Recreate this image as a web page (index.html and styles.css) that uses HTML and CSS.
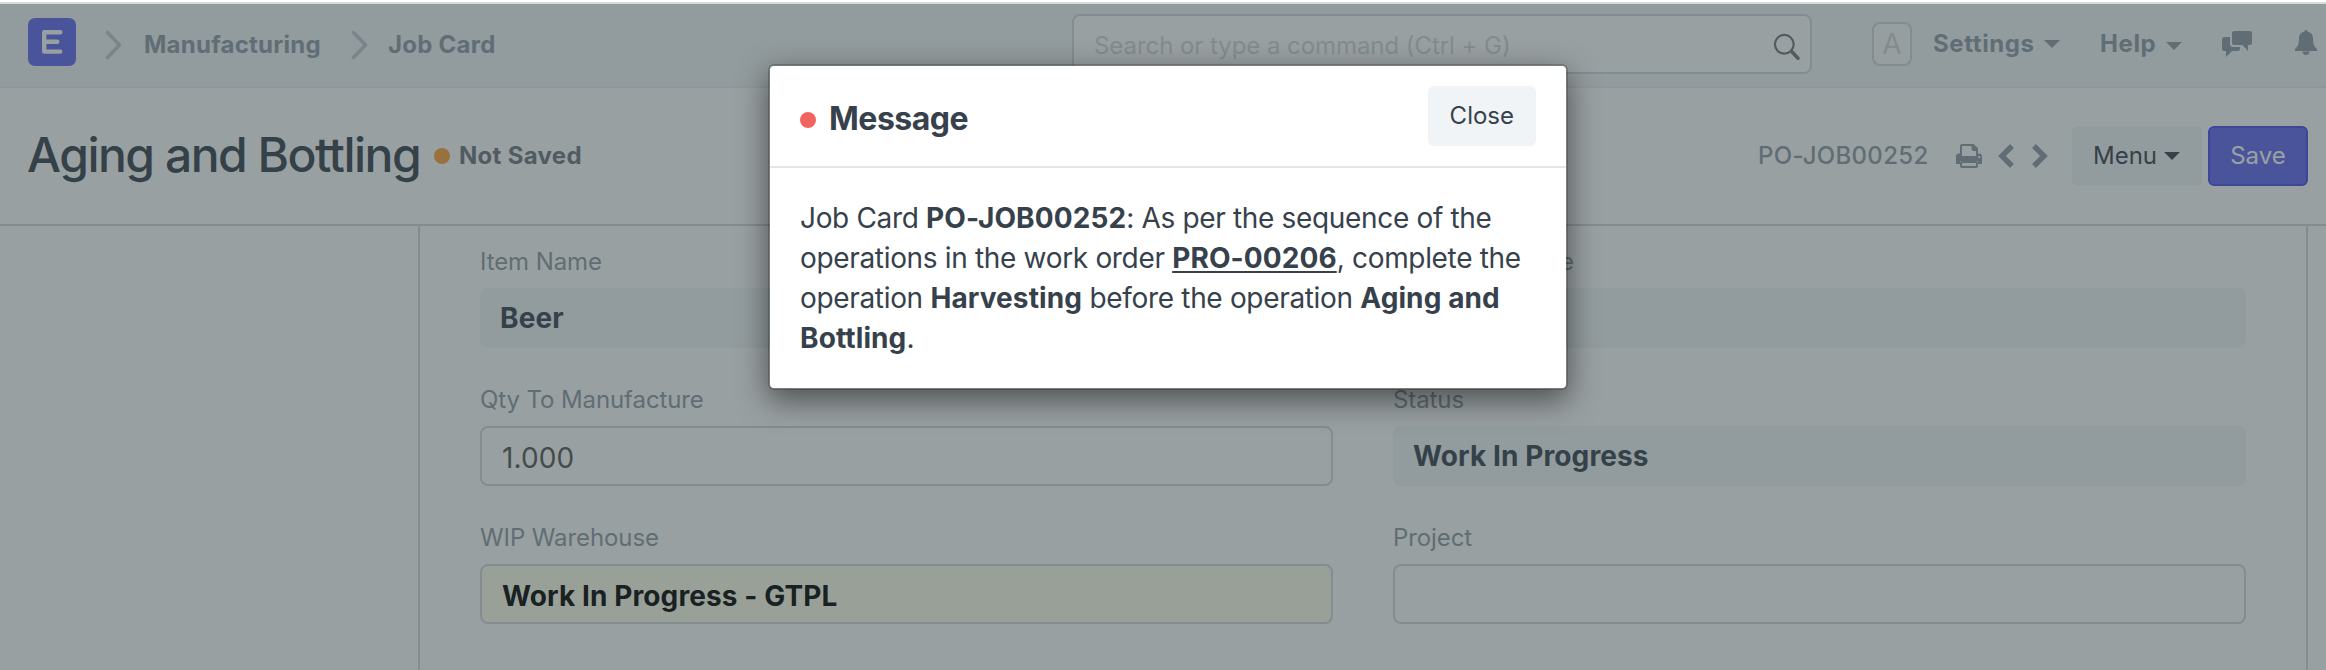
FILE: index.html
```
<!DOCTYPE html>
<html lang="en">
<head>
<meta charset="utf-8">
<title>Aging and Bottling</title>
<link rel="stylesheet" href="styles.css">
</head>
<body>
<div class="topline"></div>
<div class="desk">
  <header class="navbar">
    <div class="crumbs">
      <svg class="logo" width="48" height="48" viewBox="0 0 48 48"><rect width="48" height="48" rx="7" fill="#6167f3"/><path d="M32.3 14.2H16.2V33.6H32.3M16.2 23.8H29.3" fill="none" stroke="#fff" stroke-width="4.4" stroke-linecap="round" stroke-linejoin="round"/></svg>
      <svg class="sep sep-first" width="18" height="30" viewBox="0 0 18 30"><path d="M2.5 2.5 14.5 15 2.5 27.5" fill="none" stroke="#c0c9d2" stroke-width="3.6" stroke-linecap="round" stroke-linejoin="round"/></svg>
      <span class="crumb crumb-module">Manufacturing</span>
      <svg class="sep sep-second" width="18" height="30" viewBox="0 0 18 30"><path d="M2.5 2.5 14.5 15 2.5 27.5" fill="none" stroke="#c0c9d2" stroke-width="3.6" stroke-linecap="round" stroke-linejoin="round"/></svg>
      <span class="crumb">Job Card</span>
    </div>
    <div class="search">
      <span class="placeholder">Search or type a command (Ctrl + G)</span>
      <svg width="28" height="28" viewBox="0 0 28 28"><circle cx="11.3" cy="11.3" r="9.4" fill="none" stroke="#6c7680" stroke-width="2.2"/><path d="m18.4 18.2 6.6 7" stroke="#6c7680" stroke-width="3.6" stroke-linecap="round"/></svg>
    </div>
    <div class="tools">
      <span class="avatar">A</span>
      <span class="tool tool-settings">Settings</span><i class="caret caret-settings"></i>
      <span class="tool tool-help">Help</span><i class="caret caret-help"></i>
      <svg class="chat" width="30" height="27" viewBox="0 0 30 27" fill="#8d99a6"><path d="M12.500 0h15a2.500 2.500 0 0 1 2.500 2.500v9a2.500 2.500 0 0 1-2.500 2.500H26v6l-5.500-6H12.500a2.500 2.500 0 0 1-2.500-2.500v-9A2.500 2.500 0 0 1 12.500 0Z"/><path d="M2.500 6H8v7a3 3 0 0 0 3 3h7v1.500a2.500 2.500 0 0 1-2.500 2.500H10l-6 6v-6H2.500A2.500 2.500 0 0 1 0 17.500v-9A2.500 2.500 0 0 1 2.500 6Z"/></svg>
      <svg class="bell" width="22" height="25" viewBox="0 0 22 25" fill="#8d99a6"><path d="M11 0a1.500 1.500 0 0 1 1.500 1.700C16.200 2.300 18 5 18 8.500c0 6 1.500 8.500 4 10.500v2H0v-2c2.500-2 4-4.500 4-10.500C4 5 5.800 2.300 9.500 1.700A1.500 1.500 0 0 1 11 0Z"/><path d="M7.500 21.500h7a3.500 3.400 0 0 1-7 0Z"/></svg>
    </div>
  </header>

  <section class="page-head">
    <h1>Aging and Bottling</h1>
    <i class="dot dot-orange"></i>
    <span class="unsaved">Not Saved</span>
    <span class="doc-name">PO-JOB00252</span>
    <svg class="print" width="26" height="24" viewBox="0 0 26 24"><path d="M5 13V2Q5 1 6 1H17L21 5V13" fill="none" stroke="#8d99a6" stroke-width="2"/><path d="M15.500 0H17.500L22 4.500V7H17.500Q15.500 7 15.500 5Z" fill="#8d99a6"/><path d="M0 12.500Q0 9.500 3 9.500H4V12H22V9.500H23Q26 9.500 26 12.500V20H22V17H4V20H0Z" fill="#8d99a6"/><rect x="5" y="18" width="16" height="5" rx="1" fill="#fff" stroke="#8d99a6" stroke-width="2"/><circle cx="23.200" cy="13" r="1.100" fill="#fff"/></svg>
    <svg class="prev" width="17" height="26" viewBox="0 0 17 26"><path d="M14 3 4 13 14 23" fill="none" stroke="#8d99a6" stroke-width="5.400"/></svg>
    <svg class="next" width="17" height="26" viewBox="0 0 17 26"><path d="M3 3 13 13 3 23" fill="none" stroke="#8d99a6" stroke-width="5.400"/></svg>
    <span class="btn btn-menu">Menu<i class="caret caret-dark"></i></span>
    <span class="btn btn-save">Save</span>
  </section>

  <main class="content">
    <div class="form">
      <div class="field"><label>Item Name</label><div class="value readonly">Beer</div></div>
      <div class="field"><label class="covered">e</label><div class="value readonly"></div></div>
      <div class="field"><label>Qty To Manufacture</label><div class="value input">1.000</div></div>
      <div class="field"><label>Status</label><div class="value readonly">Work In Progress</div></div>
      <div class="field"><label>WIP Warehouse</label><div class="value input required">Work In Progress - GTPL</div></div>
      <div class="field"><label>Project</label><div class="value input"></div></div>
    </div>
  </main>
  <div class="backdrop"></div>
</div>

<div class="modal">
  <div class="modal-head">
    <i class="dot dot-red"></i>
    <h2>Message</h2>
    <span class="btn btn-close">Close</span>
  </div>
  <div class="modal-body">Job Card <b>PO-JOB00252</b>: As per the sequence of the<br>operations in the work order <b><u>PRO-00206</u></b>, complete the<br>operation <b>Harvesting</b> before the operation <b>Aging and<br>Bottling</b>.</div>
</div>
</body>
</html>
```
FILE: styles.css
```
* { box-sizing: border-box; }
body {
  margin: 0;
  height: 670px;
  overflow: hidden;
  background: #fff;
  color: #36414c;
  font-family: Inter, "Liberation Sans", sans-serif;
  font-size: 24px;
  line-height: 30px;
  white-space: nowrap;
}
svg, i { display: block; flex: none; }
h1, h2 { margin: 0; }

.topline { height: 4px; border-bottom: 2px solid #d9dbdd; }
.desk { position: relative; height: 666px; display: flex; flex-direction: column; }
.backdrop { position: absolute; inset: 0; background: rgba(51, 65, 67, .5); }

.navbar {
  height: 84px;
  flex: none;
  display: flex;
  align-items: flex-start;
  background: #f0f4f7;
  border-bottom: 2px solid #edecf0;
  color: #8d99a6;
  font-weight: 700;
}
.crumbs { width: 1072px; height: 82px; padding-left: 28px; display: flex; align-items: center; letter-spacing: .25px; }
.logo { margin-top: -6px; }
.sep-first { margin: 0 21px 0 29px; }
.sep-second { margin: 0 19px 0 29px; }
.crumb-module { width: 178px; }

.search {
  width: 740px;
  height: 60px;
  margin-top: 10px;
  padding: 0 9px 0 20px;
  display: flex;
  align-items: center;
  justify-content: space-between;
  background: #fff;
  border: 2px solid #d3d6dc;
  border-radius: 8px;
  font-weight: 400;
}
.search svg { margin-top: 5px; }
.placeholder { color: #d1d6da; padding-top: 3px; letter-spacing: -.06px; }

.tools { height: 80px; margin-left: 60px; display: flex; align-items: center; letter-spacing: .6px; }
.avatar {
  width: 40px;
  height: 44px;
  border: 2px solid #d3d6dc;
  border-radius: 8px;
  background: #fafbfc;
  color: #d1d6da;
  font-size: 28px;
  line-height: 41px;
  font-weight: 400;
  text-align: center;
  letter-spacing: 0;
}
.tool-settings { width: 111px; margin-left: 21px; }
.tool-help { width: 66px; margin-left: 40px; }
.caret { width: 16px; height: 8px; background: #8d99a6; clip-path: polygon(0 0, 100% 0, 50% 100%); }
.caret-help { margin-top: 4px; }
.chat { margin-left: 40px; }
.bell { margin: -4px 0 0 43px; }

.page-head { height: 138px; flex: none; padding: 0 18px 0 28px; display: flex; align-items: center; background: #fff; border-bottom: 2px solid #d3d6dc; }
h1 { width: 407px; margin: -3px 0 0 -1px; font-size: 48px; line-height: 60px; font-weight: 500; letter-spacing: -1.5px; }
.dot { width: 16px; height: 16px; border-radius: 50%; }
.dot-orange { background: #ffa03a; }
.unsaved { margin-left: 9px; font-weight: 700; color: #6c7680; letter-spacing: .3px; }
.doc-name { margin-left: auto; width: 198px; font-weight: 500; color: #8d99a6; letter-spacing: .3px; }
.prev { margin-left: 16px; }
.next { margin: 0 24px 0 16px; }
.btn { height: 60px; padding: 0 22px; display: flex; align-items: center; border-radius: 6px; background: #f0f4f7; }
.btn-menu { width: 130px; justify-content: space-between; padding-left: 21px; margin-right: 6px; }
.caret-dark { background: #36414c; }
.btn-save { width: 100px; justify-content: center; padding: 0; background: #6167f3; border: 2px solid #464cf0; color: #fff; }

.content { flex: 1; padding: 0 18px 0 418px; background: #fff; }
.form {
  height: 100%;
  padding: 20px 60px 0 60px;
  display: grid;
  grid-template-columns: 1fr 1fr;
  grid-auto-rows: 102px;
  gap: 36px 60px;
  border: solid #d3d6dc;
  border-width: 0 2px;
}
.field { display: flex; flex-direction: column; gap: 12px; }
label { height: 30px; padding-top: 1px; color: #8d99a6; letter-spacing: -.1px; }
.covered { padding-left: 167px; }
.value { height: 60px; padding: 0 20px; line-height: 60px; border-radius: 8px; font-size: 28px; letter-spacing: .1px; }
.readonly { background: #f0f4f7; font-weight: 700; }
.input { border: 2px solid #d3d6dc; color: #555; }
.required { background: #fffeed; color: #000; font-weight: 700; }

.modal {
  position: absolute;
  left: 768px;
  top: 64px;
  width: 800px;
  height: 326px;
  border: 2px solid rgba(0, 0, 0, .2);
  border-radius: 6px;
  background: #fff;
  background-clip: padding-box;
  box-shadow: 0 10px 30px rgba(0, 0, 0, .5);
}
.modal-head { height: 102px; padding: 0 30px; display: flex; align-items: center; border-bottom: 2px solid #e5e5e5; }
.dot-red { background: #f0645f; margin-top: 8px; }
h2 { margin: 5px 0 0 13px; font-size: 32px; line-height: 40px; font-weight: 700; letter-spacing: -.5px; }
.btn-close { margin-left: auto; padding-bottom: 1px; }
.modal-body { padding: 30px; font-size: 28px; line-height: 40px; letter-spacing: -.33px; }
.modal-body b { letter-spacing: .1px; }
.modal-body u { text-decoration-thickness: 2px; text-underline-offset: 3px; }
```
